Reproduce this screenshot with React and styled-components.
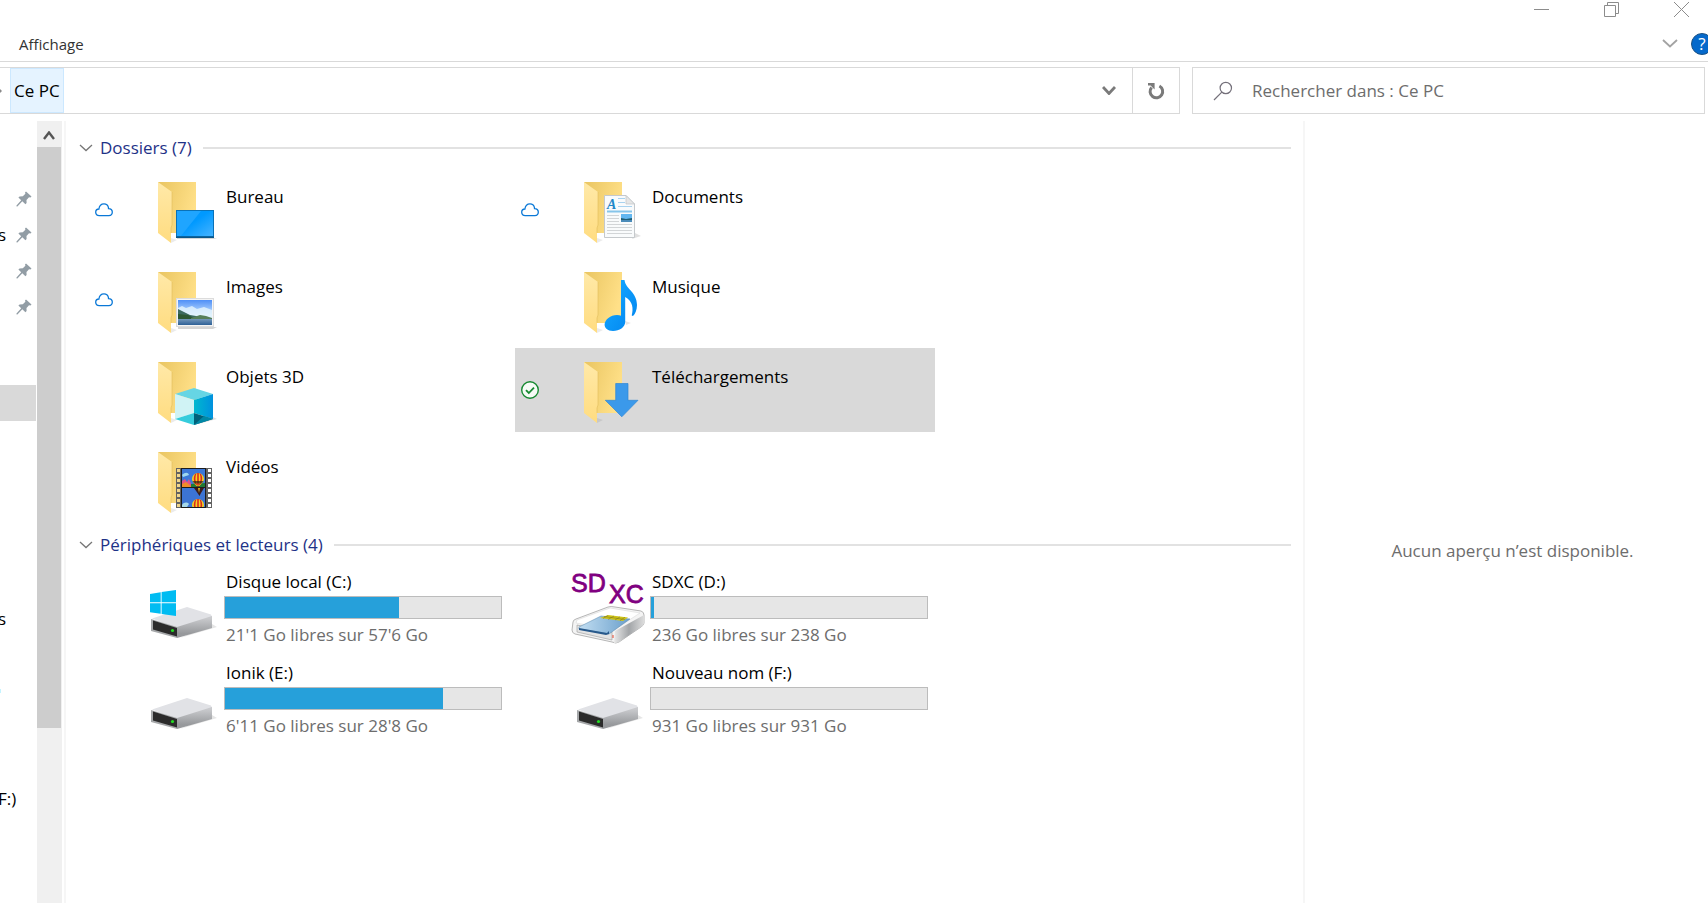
import React from 'react';
import styled, { createGlobalStyle } from 'styled-components';

const GlobalStyle = createGlobalStyle`
  * {
    box-sizing: border-box;
  }
  body {
    margin: 0;
    background: #fff;
    color: #000;
    font-family: 'Open Sans', 'Noto Sans', sans-serif;
    font-size: 17px;
    line-height: 22px;
    overflow: hidden;
  }
  button,
  input {
    font: inherit;
    color: inherit;
  }
  button {
    padding: 0;
    border: none;
    background: none;
    text-align: left;
  }
  svg {
    display: block;
    flex: none;
  }
`;

const Window = styled.div`
  display: flex;
  flex-direction: column;
  height: 100vh;
  overflow: hidden;
`;

const TitleBar = styled.header`
  display: flex;
  justify-content: flex-end;
  height: 26px;
`;

const CaptionButton = styled.button`
  display: flex;
  justify-content: center;
  width: 70px;
  padding-top: 2px;

  &:last-child {
    width: 62px;
    padding-left: 8px;
  }
`;

const Ribbon = styled.nav`
  display: flex;
  align-items: center;
  height: 36px;
  padding-left: 19px;
  border-bottom: 1px solid #d9d9d9;
`;

const RibbonTab = styled.button`
  margin-right: auto;
  color: #333;
  font-size: 15px;
`;

const RibbonToggle = styled.button`
  padding: 0 13px;
`;

const HelpButton = styled.button`
  display: flex;
  align-items: center;
  justify-content: center;
  width: 22px;
  height: 22px;
  margin-right: -5px;
  border: 1px solid #1b5183;
  border-radius: 50%;
  background: #0569cb;
  color: #fff;
`;

const Toolbar = styled.div`
  display: flex;
  gap: 12px;
  padding: 5px 3px 7px 0;
`;

const AddressBar = styled.div`
  display: flex;
  flex: 1;
  align-items: stretch;
  height: 47px;
  border: 1px solid #d9d9d9;
  border-left: none;
`;

const Separator = styled.span`
  display: flex;
  align-items: center;
  width: 10px;
`;

const Crumb = styled.button`
  padding: 0 3px;
  border: 1px solid #cce8ff;
  background: #e5f3ff;
`;

const AddressButton = styled.button`
  display: flex;
  align-items: center;
  justify-content: center;
  width: 47px;
  margin-left: ${({ $push }) => ($push ? 'auto' : '0')};
  border-left: ${({ $divided }) => ($divided ? '1px solid #d9d9d9' : 'none')};
`;

const SearchBox = styled.label`
  display: flex;
  flex: 0 0 513px;
  align-items: center;
  gap: 19px;
  padding: 0 20px;
  border: 1px solid #d9d9d9;
`;

const SearchInput = styled.input`
  flex: 1;
  min-width: 0;
  padding: 0;
  border: none;
  outline: none;
  background: none;

  &::placeholder {
    color: #6d6d6d;
    opacity: 1;
  }
`;

const Body = styled.div`
  display: flex;
  flex: 1;
  min-height: 0;
`;

const Sidebar = styled.nav`
  width: 37px;
  padding: 60px 1px 0 0;
  overflow: hidden;
`;

const NavGroup = styled.div`
  margin-bottom: 60px;
`;

const NavItem = styled.a`
  display: flex;
  align-items: center;
  justify-content: space-between;
  height: 36px;
  padding-right: 4px;
  background: ${({ $selected }) => ($selected ? '#d9d9d9' : 'none')};
  color: #000;
  text-decoration: none;
  text-indent: -2px;
`;

const NavPin = styled.span`
  margin-left: auto;
`;

const NavDriveMark = styled.span`
  width: 1px;
  height: 4px;
  background: #c5f4ff;
`;

const ScrollTrack = styled.div`
  display: flex;
  flex-direction: column;
  width: 25px;
  padding-right: 1px;
  background: #f0f0f0;
`;

const ScrollButton = styled.button`
  display: flex;
  align-items: center;
  justify-content: center;
  height: 26px;
  padding-top: 3px;
`;

const ScrollThumb = styled.div`
  height: 581px;
  background: #cdcdcd;
`;

const Content = styled.main`
  flex: 1;
  margin-left: 2px;
  padding: 13px 12px 0 13px;
  border-left: 2px solid #f6f6f6;
  border-right: 2px solid #f6f6f6;
`;

const GroupHeader = styled.h2`
  display: flex;
  align-items: center;
  gap: 11px;
  height: 28px;
  margin: 0;
  color: #1e3287;
  font-size: 17px;
  font-weight: 400;

  &::after {
    flex: 1;
    height: 2px;
    background: #e2e2e2;
    content: '';
  }
`;

const GroupToggle = styled.button`
  display: flex;
  align-items: center;
  gap: 7px;
`;

const TileGrid = styled.div`
  display: grid;
  grid-template-columns: repeat(auto-fill, 420px);
  grid-auto-rows: 84px;
  gap: ${({ $drives }) => ($drives ? '7px 6px' : '6px')};
  margin: 6px 0 9px 10px;
`;

const Tile = styled.button`
  display: grid;
  grid-template-columns: 51px 72px 1fr;
  align-items: center;
  padding: 0 7px 0 6px;
  background: ${({ $selected }) => ($selected ? '#d9d9d9' : 'none')};
`;

const FolderName = styled.span`
  align-self: start;
  padding: 18px 0 0 8px;
`;

const DriveInfo = styled.span`
  display: flex;
  flex-direction: column;
  align-self: start;
  padding: 6px 0 0 6px;
`;

const DriveText = styled.span`
  padding-left: 2px;
  color: ${({ $muted }) => ($muted ? '#6d6d6d' : '#000')};
`;

const Usage = styled.progress`
  appearance: none;
  width: 100%;
  height: 23px;
  margin: 3px 0 5px;
  border: 1px solid #bcbcbc;
  background: #e6e6e6;

  &::-webkit-progress-bar {
    background: #e6e6e6;
  }
  &::-webkit-progress-value {
    background: #26a0da;
  }
`;

const Preview = styled.aside`
  display: flex;
  align-items: center;
  justify-content: center;
  width: 403px;
  padding: 78px 0 0 12px;
  color: #6d6d6d;
`;

const Chevron = ({ w = 14, h = 8, up, color = '#767676', stroke = 1.3 }) => (
  <svg width={w} height={h} viewBox={`0 0 ${w} ${h}`} fill='none' stroke={color} strokeWidth={stroke}>
    <path d={up ? `M1 ${h - 1}L${w / 2} 1.5L${w - 1} ${h - 1}` : `M1 1L${w / 2} ${h - 1.5}L${w - 1} 1`} />
  </svg>
);

const PinIcon = () => (
  <svg width='16' height='16' viewBox='0 0 16 16' fill='#929da5'>
    <path d='M10 0.5L15.5 5.5L14.5 6.5L13 6.3L10.5 9L10.6 12L9.4 13.2L6.3 10.3L1.4 15.4L0.3 15.2L0.5 14.4L5.2 9.2L2.4 6.6L3.6 5.4L6.8 5.3L9.4 2.7L9 1.5Z' />
  </svg>
);

const CloudIcon = () => (
  <svg width='18' height='18' viewBox='0 0 18 18' fill='none' stroke='#0a78d7' strokeWidth='1.3'>
    <path d='M4.2 14.6C2 14.6 0.7 13.2 0.7 11.3C0.7 9.3 2.1 8 3.9 8C4.3 4.9 6.3 2.8 9 2.8C11.3 2.8 12.9 4.1 13.4 6.3L13.5 7.6C15.8 7.5 17.3 9 17.3 11.1C17.3 13.2 15.9 14.6 13.9 14.6Z' />
  </svg>
);

const SyncedIcon = () => (
  <svg width='18' height='18' viewBox='0 0 18 18' fill='none' stroke='#178a32'>
    <circle cx='9' cy='9' r='8.3' fill='#f6fbf6' strokeWidth='1.4' />
    <path d='M5 9.2L7.8 12L13 6.6' strokeWidth='1.8' />
  </svg>
);

const FolderIcon = ({ children }) => (
  <svg width='72' height='72' viewBox='0 0 72 72'>
    <defs>
      <linearGradient id='folderBack' x1='0' y1='0' x2='1' y2='0.4'>
        <stop offset='0' stopColor='#e9c561' />
        <stop offset='1' stopColor='#ffe088' />
      </linearGradient>
      <linearGradient id='folderFlap' x1='0' y1='0' x2='0' y2='1'>
        <stop offset='0' stopColor='#ffe9a8' />
        <stop offset='1' stopColor='#ffdc80' />
      </linearGradient>
    </defs>
    <path d='M25 69L31 66L25 64Z' fill='#000' opacity='0.08' />
    <path d='M12 8H50V59H20Z' fill='url(#folderBack)' />
    <path d='M12 8L26 18V51L25 54V69L12 59Z' fill='url(#folderFlap)' />
    <path d='M26 18V51L25 54V59' fill='none' stroke='#e0bd5c' strokeWidth='0.6' />
    {children}
  </svg>
);

const DesktopArt = () => (
  <>
    <defs>
      <linearGradient id='screen' x1='0' y1='0' x2='1' y2='1'>
        <stop offset='0.45' stopColor='#0099ff' />
        <stop offset='1' stopColor='#48b4ff' />
      </linearGradient>
    </defs>
    <path d='M31 64H71L68 65H31Z' fill='#bbb' opacity='0.6' />
    <rect x='30.5' y='36.5' width='37' height='26' fill='url(#screen)' stroke='#0a72b8' />
    <path d='M31 37H55L35 62H31Z' fill='#1fa5ff' />
    <path d='M30 63.2H68' stroke='#0b5688' strokeWidth='1.4' />
  </>
);

const PictureArt = () => (
  <>
    <defs>
      <linearGradient id='sky' x1='0' y1='0' x2='0' y2='1'>
        <stop offset='0' stopColor='#4f8ff7' />
        <stop offset='0.6' stopColor='#c9e6ff' />
      </linearGradient>
      <linearGradient id='lake' x1='0' y1='0' x2='0' y2='1'>
        <stop offset='0' stopColor='#7397bb' />
        <stop offset='1' stopColor='#2e6096' />
      </linearGradient>
    </defs>
    <path d='M32 63H71L67 65H32Z' fill='#aaa' opacity='0.5' />
    <rect x='30.5' y='34.5' width='37' height='28' fill='#f4f4f4' stroke='#dcdcdc' />
    <rect x='32' y='36' width='34' height='25' fill='url(#sky)' />
    <path d='M32 44L36 42L40 44L46 42L51 45L58 43L66 46V54H32Z' fill='#e6f5fd' opacity='0.8' />
    <path d='M32 45L38 48L44 51L50 52L60 55H32Z' fill='#3c6a60' />
    <path d='M32 50L42 51L50 55H32Z' fill='#2c5733' />
    <path d='M45 54L54 51L60 52L66 54V56H45Z' fill='#567f5a' />
    <rect x='32' y='55' width='34' height='6' fill='url(#lake)' />
  </>
);

const CubeArt = () => (
  <>
    <defs>
      <linearGradient id='cubeRight' x1='0' y1='0' x2='1' y2='0'>
        <stop offset='0' stopColor='#00b8cf' />
        <stop offset='1' stopColor='#0091de' />
      </linearGradient>
    </defs>
    <path d='M52 70L71 65L67 63Z' fill='#000' opacity='0.12' />
    <path d='M48 34L67 40L48 46L29 40Z' fill='#66d5e4' />
    <path d='M29 40L48 46V59L29 65Z' fill='#d0f3f5' />
    <path d='M67 40L48 46V59L67 65Z' fill='url(#cubeRight)' />
    <path d='M29 65L48 59V71Z' fill='#36ccdc' />
    <path d='M67 65L48 59V71Z' fill='#006079' />
    <path d='M67 65L58 62L48 71Z' fill='#0088a6' />
  </>
);

const DocumentArt = () => (
  <>
    <path d='M60 65L69 62L63 59Z' fill='#000' opacity='0.12' />
    <path d='M32.5 21.5H54L62.5 30V63.5H32.5Z' fill='#f9fbfc' stroke='#c5c9cc' />
    <path d='M54 21.5V30H62.5Z' fill='#e6e6e6' stroke='#bfc3c6' strokeWidth='0.7' />
    <text x='35' y='35' fontFamily='"Liberation Serif", serif' fontSize='14' fontStyle='italic' fontWeight='700' fill='#1e88c8'>A</text>
    <path d='M46 24.5H53M46 28.5H53M46 32.5H60' stroke='#a9d3ef' />
    <path d='M35 37.5H60' stroke='#86c5ea' strokeWidth='2' />
    <path d='M35 41.5H47M35 44.5H47M35 47.5H47M35 50.5H60M35 53.5H60M35 56.5H60M35 59.5H60' stroke='#d2d5d7' />
    <rect x='49' y='40' width='11' height='8' fill='#62b7f0' />
    <path d='M49 44L54 45L60 44V48H49Z' fill='#1f5d74' />
    <path d='M49 47H60' stroke='#5b9bd0' strokeWidth='1.5' />
  </>
);

const MusicArt = () => (
  <>
    <defs>
      <linearGradient id='note' x1='0' y1='0' x2='1' y2='1'>
        <stop offset='0.2' stopColor='#12a5ff' />
        <stop offset='1' stopColor='#0083ee' />
      </linearGradient>
    </defs>
    <path d='M54 61L59 59L53 57Z' fill='#000' opacity='0.1' />
    <path
      d='M49 16H52.5C53.5 25 65 28 65 41C65 46 63 50 61 52L59.7 51.6C61.5 45 61 37 53.2 33V58C53.2 63 47.5 67 41 67C35.5 67 32.5 64 32.6 60.5C32.8 55.5 38.5 51 45 51C46.7 51 48 51.2 49 51.7Z'
      fill='url(#note)'
    />
  </>
);

const DownloadArt = () => (
  <path d='M43.7 29.5H56V46.3H66L49.8 62.8L33.3 46.3H43.7Z' fill='#3b99ea' stroke='#2f86d4' strokeWidth='0.7' />
);

const Balloon = ({ y }) => (
  <g transform={`translate(52 ${y})`}>
    <path d='M-6 0A6 6 0 0 1 6 0C6 3 3 5 1.5 7H-1.5C-3 5 -6 3 -6 0Z' fill='#f5d023' />
    <path d='M-3 -5C-5 -1 -4.5 2 -2 6L-1 6C-3 2 -3 -2 -1.5 -5.7ZM3 -5C5 -1 4.5 2 2 6L1 6C3 2 3 -2 1.5 -5.7Z' fill='#dc2a1c' />
    <path d='M-0.8 -6H0.8V6H-0.8Z' fill='#dc2a1c' />
    <path d='M-5.5 2H5.5L3.8 4.4H-3.8Z' fill='#2a2414' opacity='0.7' />
    <rect x='-1.2' y='6.6' width='2.4' height='2' fill='#7a3a12' />
  </g>
);

const FilmArt = () => (
  <>
    <defs>
      <clipPath id='frameTop'>
        <rect x='36' y='25' width='23' height='18' />
      </clipPath>
      <clipPath id='frameBottom'>
        <rect x='36' y='44' width='23' height='19' />
      </clipPath>
    </defs>
    <rect x='30' y='24' width='36' height='40' fill='#626262' />
    <rect x='35' y='24' width='25' height='40' fill='#1c1c1c' />
    {[0, 1, 2, 3, 4, 5, 6, 7].map((i) => (
      <React.Fragment key={i}>
        <rect x='31' y={25 + i * 5} width='3' height='3' fill='#f1d68a' />
        <rect x='62' y={25 + i * 5} width='3' height='3' fill='#fff' />
      </React.Fragment>
    ))}
    <g clipPath='url(#frameTop)'>
      <rect x='36' y='25' width='23' height='18' fill='#3c78d8' />
      <path d='M36 31C39 28 42 28 43 31L37 33Z' fill='#9fd8ee' />
      <path d='M36 37L39 35L41 38L43 35L46 42H36Z' fill='#e0518a' />
      <path d='M36 40L40 38L45 42V43H36Z' fill='#f08c28' />
      <path d='M45 40L59 39V43H45Z' fill='#1e7a34' />
      <Balloon y={35} />
    </g>
    <g clipPath='url(#frameBottom)'>
      <rect x='36' y='44' width='23' height='19' fill='#3c74d4' />
      <path d='M48 44H58L55 49L53.5 52L51.5 49Z' fill='#3a1c1c' />
      <path d='M52 44H54L53 49Z' fill='#e0b522' />
      <path d='M36 61C38 58 41 58 43 60L41 63H36Z' fill='#a6d8ea' />
      <Balloon y={61} />
    </g>
  </>
);

const WindowsFlag = () => (
  <path d='M4 23L14.7 21.2V31.3H4ZM15.6 21L30 19V31.3H15.6ZM4 32.2H14.7V42.8L4 41.3ZM15.6 32.2H30V45L15.6 42.9Z' fill='#00bcf2' />
);

const DriveIcon = ({ children }) => (
  <svg width='72' height='72' viewBox='0 0 72 72'>
    <defs>
      <linearGradient id='driveSide' x1='0' y1='0' x2='0' y2='1'>
        <stop offset='0.1' stopColor='#c9cacd' />
        <stop offset='0.8' stopColor='#97999c' />
      </linearGradient>
    </defs>
    <path d='M34 67L71 56L66 53Z' fill='#000' opacity='0.1' />
    <path d='M6 47.5L41 36L65 43.5L66 46L31 57Z' fill='#e1e2e6' />
    <path d='M31 56L66 45V57L31 67Z' fill='url(#driveSide)' />
    <path d='M5 48L31 56V67L5 60Z' fill='#a5a7a9' />
    <path d='M7 49.5L31 57V65.5L7 58.5Z' fill='#2b2b2b' />
    <circle cx='26.5' cy='59.5' r='1.6' fill='#23dc23' />
    {children}
  </svg>
);

const SdxcIcon = () => (
  <svg width='72' height='72' viewBox='0 0 72 72' overflow='visible'>
    <defs>
      <linearGradient id='readerSide' x1='0' y1='0' x2='1' y2='0'>
        <stop offset='0' stopColor='#e9e9e9' />
        <stop offset='0.5' stopColor='#a2a5a8' />
        <stop offset='1' stopColor='#dcdcdc' />
      </linearGradient>
      <linearGradient id='card' x1='0' y1='0' x2='1' y2='0'>
        <stop offset='0' stopColor='#c2def2' />
        <stop offset='1' stopColor='#6a9fcb' />
      </linearGradient>
    </defs>
    <g fontFamily='"Liberation Sans", sans-serif' fontSize='25' fill='#800080' stroke='#800080' strokeWidth='0.8'>
      <text x='-1' y='21'>SD</text>
      <text x='37' y='32'>XC</text>
    </g>
    <path d='M1 51Q1 49 4 48L36 36Q39 35 43 36L69 40Q72 41 72 44V52Q72 54 69 56L47 71Q44 73 40 71L3 63Q0 62 0 59Z' fill='#f4f4f4' stroke='#a4a4a4' strokeWidth='0.8' />
    <path d='M43 60L72 44V52Q72 54 69 56L47 71Q45 72 42 72Z' fill='url(#readerSide)' />
    <path d='M5 49L38 37L68 42L42 59L4 52Z' fill='#fff' stroke='#d4d4d4' strokeWidth='0.5' />
    <path d='M5 54L40 61V69L5 61Z' fill='#e4e4e4' stroke='#9b9b9b' strokeWidth='0.6' />
    <path d='M7 56L29 45L58 48L37 63L7 58Z' fill='url(#card)' stroke='#5385ad' strokeWidth='0.5' />
    <path d='M7 57L35 62L37 60V63L34 64L7 59Z' fill='#28598b' />
    <path d='M28 47L36 44L56 46.5L51 50Z' fill='#cfc416' />
    <path d='M32 45.5L53 48.5M36 44.5L31 47.5M42 45L36 48.5M48 45.8L43 49M53 46.2L48 49.6' stroke='#777022' strokeWidth='0.5' fill='none' />
    <path d='M41 64V67' stroke='#e8442c' />
  </svg>
);

const SearchIcon = () => (
  <svg width='20' height='20' viewBox='0 0 20 20' fill='none' stroke='#74707a' strokeWidth='1.2'>
    <circle cx='12.8' cy='7' r='5.7' />
    <path d='M8.8 11.2L1 19' />
  </svg>
);

const RefreshIcon = () => (
  <svg width='18' height='18' viewBox='0 0 18 18' fill='none' stroke='#7a7a7a' strokeWidth='3'>
    <path d='M4.6 5.4A6.3 6.3 0 1 0 12.4 4' />
    <path d='M1 1H7.6V7.6L5.5 5.5L3.6 3.4H1Z' fill='#7a7a7a' stroke='none' />
  </svg>
);

const folders = [
  { name: 'Bureau', Art: DesktopArt, Status: CloudIcon },
  { name: 'Documents', Art: DocumentArt, Status: CloudIcon },
  { name: 'Images', Art: PictureArt, Status: CloudIcon },
  { name: 'Musique', Art: MusicArt },
  { name: 'Objets 3D', Art: CubeArt },
  { name: 'Téléchargements', Art: DownloadArt, Status: SyncedIcon, selected: true },
  { name: 'Vidéos', Art: FilmArt },
];

const drives = [
  { name: 'Disque local (C:)', free: "21'1 Go libres sur 57'6 Go", used: 63, icon: <DriveIcon><WindowsFlag /></DriveIcon> },
  { name: 'SDXC (D:)', free: '236 Go libres sur 238 Go', used: 1, icon: <SdxcIcon /> },
  { name: 'Ionik (E:)', free: "6'11 Go libres sur 28'8 Go", used: 79, icon: <DriveIcon /> },
  { name: 'Nouveau nom (F:)', free: '931 Go libres sur 931 Go', used: 0, icon: <DriveIcon /> },
];

const pinned = ['', 's', '', ''];
const places = ['', '', '', '', '', '', 's', '', '', '', '', 'F:)'];

const Group = ({ title, children }) => (
  <section>
    <GroupHeader>
      <GroupToggle>
        <Chevron />
        {title}
      </GroupToggle>
    </GroupHeader>
    {children}
  </section>
);

const App = () => (
  <>
    <GlobalStyle />
    <Window>
      <TitleBar>
        <CaptionButton aria-label='Réduire'>
          <svg width='15' height='15' viewBox='0 0 15 15' stroke='#8c8c8c'>
            <path d='M0 7.5H15' />
          </svg>
        </CaptionButton>
        <CaptionButton aria-label='Restaurer'>
          <svg width='15' height='15' viewBox='0 0 15 15' fill='none' stroke='#8c8c8c'>
            <path d='M0.5 3.5H11.5V14.5H0.5ZM3.5 3.5V0.5H14.5V11.5H11.5' />
          </svg>
        </CaptionButton>
        <CaptionButton aria-label='Fermer'>
          <svg width='15' height='15' viewBox='0 0 15 15' stroke='#8c8c8c'>
            <path d='M0 0L15 15M15 0L0 15' />
          </svg>
        </CaptionButton>
      </TitleBar>
      <Ribbon>
        <RibbonTab>Affichage</RibbonTab>
        <RibbonToggle aria-label='Développer le ruban'>
          <Chevron w={16} h={9} color='#a3a3a3' stroke={1.8} />
        </RibbonToggle>
        <HelpButton aria-label='Aide'>?</HelpButton>
      </Ribbon>
      <Toolbar>
        <AddressBar>
          <Separator>
            <svg width='2' height='4' viewBox='0 0 2 4' fill='#8a8a8a'>
              <path d='M0 0L2 2L0 4Z' />
            </svg>
          </Separator>
          <Crumb>Ce PC</Crumb>
          <AddressButton $push aria-label='Emplacements précédents'>
            <Chevron w={14} h={9} color='#7a7a7a' stroke={2.8} />
          </AddressButton>
          <AddressButton $divided aria-label='Actualiser'>
            <RefreshIcon />
          </AddressButton>
        </AddressBar>
        <SearchBox>
          <SearchIcon />
          <SearchInput type='text' aria-label='Rechercher' placeholder='Rechercher dans : Ce PC' />
        </SearchBox>
      </Toolbar>
      <Body>
        <Sidebar>
          <NavGroup>
            {pinned.map((label, i) => (
              <NavItem key={i} href='#'>
                {label}
                <NavPin>
                  <PinIcon />
                </NavPin>
              </NavItem>
            ))}
          </NavGroup>
          <NavGroup>
            {places.map((label, i) => (
              <NavItem key={i} href='#' $selected={i === 0}>
                {i === 8 ? <NavDriveMark /> : label}
              </NavItem>
            ))}
          </NavGroup>
        </Sidebar>
        <ScrollTrack>
          <ScrollButton aria-label='Défiler vers le haut'>
            <Chevron w={12} h={9} up color='#555' stroke={2.4} />
          </ScrollButton>
          <ScrollThumb />
        </ScrollTrack>
        <Content>
          <Group title='Dossiers (7)'>
            <TileGrid>
              {folders.map(({ name, Art, Status, selected }) => (
                <Tile key={name} $selected={selected}>
                  <span>{Status && <Status />}</span>
                  <FolderIcon>
                    <Art />
                  </FolderIcon>
                  <FolderName>{name}</FolderName>
                </Tile>
              ))}
            </TileGrid>
          </Group>
          <Group title='Périphériques et lecteurs (4)'>
            <TileGrid $drives>
              {drives.map(({ name, free, used, icon }) => (
                <Tile key={name}>
                  <span />
                  {icon}
                  <DriveInfo>
                    <DriveText>{name}</DriveText>
                    <Usage value={used} max='100' aria-label={name} />
                    <DriveText $muted>{free}</DriveText>
                  </DriveInfo>
                </Tile>
              ))}
            </TileGrid>
          </Group>
        </Content>
        <Preview>Aucun aperçu n’est disponible.</Preview>
      </Body>
    </Window>
  </>
);

export default App;
